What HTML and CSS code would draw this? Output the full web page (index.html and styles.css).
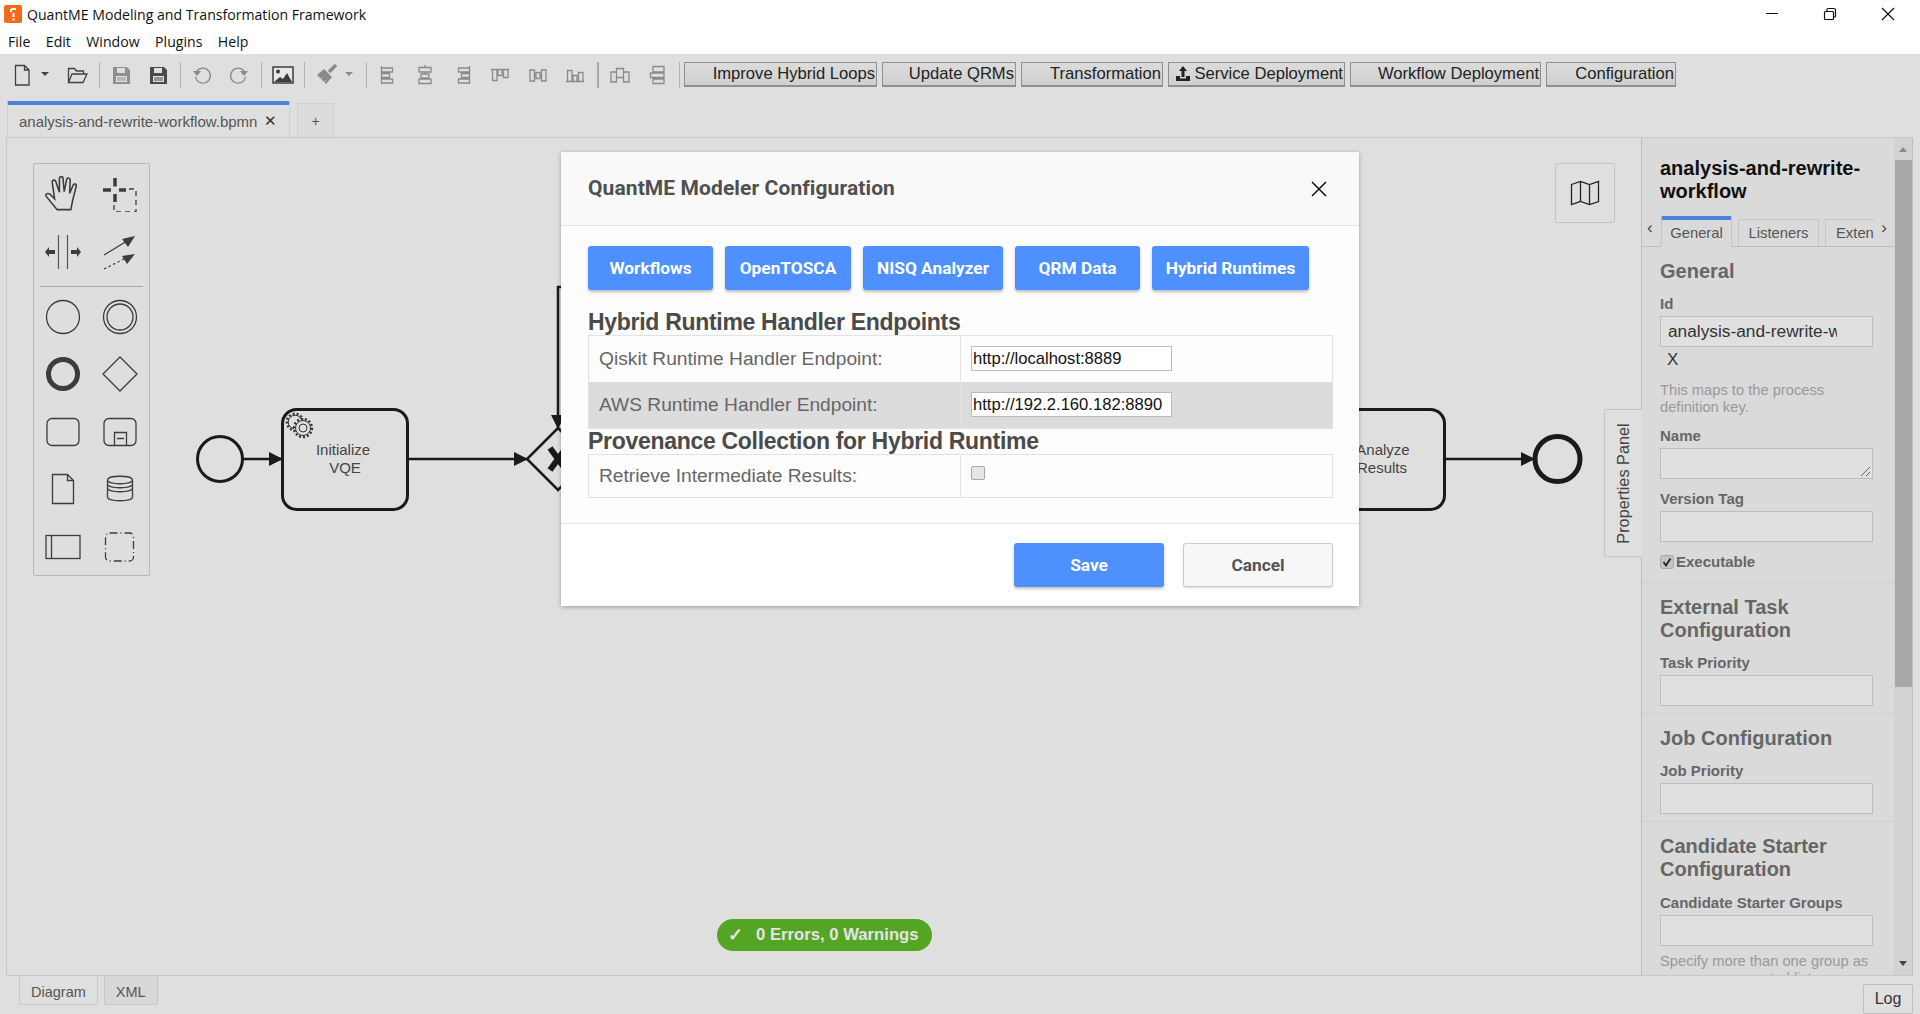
FILE: index.html
```html
<!DOCTYPE html>
<html lang="en">
<head>
    <meta charset="UTF-8">
    <title>QuantME Modeling and Transformation Framework</title>
    <link rel="stylesheet" href="styles.css">
</head>
<body>
    <div class="titlebar">
        <svg class="app-icon" width="18" height="20" viewBox="0 0 18 20">
            <rect x="0" y="1" width="18" height="18" rx="2" fill="#f26a1b"/>
            <path d="M7 5h5M7 5v3M9.500 9v4" stroke="#fff" stroke-width="2" fill="none"/>
            <rect x="8.500" y="14.500" width="2" height="2" fill="#fff"/>
        </svg>
        <span class="app-title">QuantME Modeling and Transformation Framework</span>
        <div class="window-controls">
            <svg width="46" height="28" viewBox="0 0 46 28"><path d="M17 13.500h12" stroke="#111" fill="none"/></svg>
            <svg width="46" height="28" viewBox="0 0 46 28"><path d="M18.500 11.500h7a1 1 0 0 1 1 1v6a1 1 0 0 1-1 1h-7a1 1 0 0 1-1-1v-6a1 1 0 0 1 1-1zM20 11V9.500a1 1 0 0 1 1-1h6a1.500 1.500 0 0 1 1.500 1.500v6a1 1 0 0 1-1 1H27" stroke="#111" stroke-width="1.200" fill="none"/></svg>
            <svg width="46" height="28" viewBox="0 0 46 28"><path d="M17 8l12 12M29 8L17 20" stroke="#111" stroke-width="1.200" fill="none"/></svg>
        </div>
    </div>
    <div class="menubar">
        <span>File</span>
        <span>Edit</span>
        <span>Window</span>
        <span>Plugins</span>
        <span>Help</span>
    </div>

    <div class="app">
        <div class="toolbar">
            <span class="tool"><svg width="24" height="24" viewBox="0 0 24 24"><path d="M5.500 2.500h9l4.500 4.500v15h-13.500zM14.500 2.500v4.500h4.500" class="ln"/></svg></span>
            <span class="caret-box"><i class="caret"></i></span>
            <span class="tool"><svg width="24" height="24" viewBox="0 0 24 24"><path d="M3.500 19.500v-14h6l2 2.500h7v3M3.500 19.500l3.500-8.500h15l-4 8.500z" class="ln"/></svg></span>
            <span class="sep"></span>
            <span class="tool"><svg width="24" height="24" viewBox="0 0 24 24"><path d="M4 4h14l3 3v14H4z" fill="#8f8f8f"/><rect x="8" y="5" width="8" height="5" fill="#dfdfdf"/><rect x="7" y="13" width="11" height="6" fill="#dfdfdf"/><path d="M8 15h9M8 17h9" stroke="#8f8f8f"/></svg></span>
            <span class="tool"><svg width="24" height="24" viewBox="0 0 24 24"><path d="M4 4h14l3 3v14H4z" fill="#4a4a4a"/><rect x="8" y="5" width="8" height="5" fill="#dfdfdf"/><rect x="7" y="13" width="11" height="6" fill="#dfdfdf"/><path d="M8 15h9M8 17h9" stroke="#4a4a4a"/></svg></span>
            <span class="sep"></span>
            <span class="tool"><svg width="24" height="24" viewBox="0 0 24 24"><path d="M7 8a7.500 7.500 0 1 1-1.500 6" class="ln ln-dim" stroke-width="2"/><path d="M3 8l8 0-4 5z" fill="#8a8a8a"/></svg></span>
            <span class="tool"><svg width="24" height="24" viewBox="0 0 24 24"><path d="M17 8a7.500 7.500 0 1 0 1.500 6" class="ln ln-dim" stroke-width="2"/><path d="M21 8l-8 0 4 5z" fill="#8a8a8a"/></svg></span>
            <span class="sep"></span>
            <span class="tool"><svg width="24" height="24" viewBox="0 0 24 24"><rect x="2" y="4" width="20" height="16" fill="#e8e8e8" stroke="#3c3c3c" stroke-width="1.500"/><circle cx="7" cy="8.500" r="2" fill="#3c3c3c"/><path d="M3 19l6-5 3 2 4-6 5 9z" fill="#3c3c3c"/></svg></span>
            <span class="sep"></span>
            <span class="tool"><svg width="24" height="24" viewBox="0 0 24 24"><path d="M15 9l7-7" stroke="#8a8a8a" stroke-width="3.500" fill="none"/><path d="M10 6l8 8-6 7-9-9z" fill="#8a8a8a"/><path d="M6 16.500l2-2M9.500 19.500l2-2" stroke="#dfdfdf" fill="none"/></svg></span>
            <span class="caret-box"><i class="caret caret-dim"></i></span>
            <span class="sep"></span>
            <span class="tool"><svg width="24" height="24" viewBox="0 0 24 24"><path d="M5.500 3v18M5.500 5h11v4h-11M5.500 10.500h8v4h-8M5.500 16h11v4h-11" class="ln ln-dim"/></svg></span>
            <span class="tool"><svg width="24" height="24" viewBox="0 0 24 24"><path d="M12 2v2M12 9v2M12 14.500v2M6 4.500h12v4.500H6zM8 11h8v4H8zM6 16h12v4.500H6z" class="ln ln-dim"/></svg></span>
            <span class="tool"><svg width="24" height="24" viewBox="0 0 24 24"><path d="M18.500 3v18M18.500 5h-11v4h11M18.500 10.500h-8v4h8M18.500 16h-11v4h11" class="ln ln-dim"/></svg></span>
            <span class="tool"><svg width="24" height="24" viewBox="0 0 24 24"><path d="M3 6.500h18M4.500 6.500h4.500v11H4.500zM10 6.500h4v6h-4zM15.500 6.500H20v8h-4.500z" class="ln ln-dim"/></svg></span>
            <span class="tool"><svg width="24" height="24" viewBox="0 0 24 24"><path d="M4 7h4.500v11H4zM10 9.500h4v6h-4zM15.500 7H20v11h-4.500zM8.500 12.500H10M14 12.500h1.500" class="ln ln-dim"/></svg></span>
            <span class="tool"><svg width="24" height="24" viewBox="0 0 24 24"><path d="M3 18.500h18M4.500 7.500h4.500v11H4.500zM10 12.500h4v6h-4zM15.500 9.500H20v9h-4.500z" class="ln ln-dim"/></svg></span>
            <span class="sep sep-wide"></span>
            <span class="tool"><svg width="24" height="24" viewBox="0 0 24 24"><path d="M3 9h5.500v10H3zM8.500 5.500h7v9h-7zM15.500 9H21v10h-5.500z" class="ln ln-dim"/></svg></span>
            <span class="tool"><svg width="24" height="24" viewBox="0 0 24 24"><path d="M8 3.500h11V9H8zM5.500 10h13.500v4.500H5.500zM8 16h11v4.500H8z" class="ln ln-dim"/></svg></span>
            <span class="sep"></span>
            <button class="tb-btn tb-w1">Improve Hybrid Loops</button>
            <button class="tb-btn tb-w2">Update QRMs</button>
            <button class="tb-btn tb-w3">Transformation</button>
            <button class="tb-btn tb-w4">
                <svg class="upload" width="16" height="18" viewBox="0 0 16 18"><path d="M8 1l4 5H9.500v6h-3V6H4z" fill="#222"/><path d="M1 11h4v2.500h6V11h4v5H1z" fill="#222"/></svg>
                Service Deployment
            </button>
            <button class="tb-btn tb-w5">Workflow Deployment</button>
            <button class="tb-btn tb-w6">Configuration</button>
        </div>

        <div class="tabbar">
            <div class="tab tab-active">analysis-and-rewrite-workflow.bpmn<span class="tab-close">&#10005;</span></div>
            <div class="tab tab-add">+</div>
        </div>

        <div class="main">
            <div class="canvas">
                <svg class="diagram" width="1640" height="480" viewBox="0 0 1640 480">
                    <defs>
                        <marker id="arrow" markerWidth="14" markerHeight="14" refX="13" refY="7" orient="auto" markerUnits="userSpaceOnUse">
                            <path d="M0 0L14 7L0 14z" fill="#1a1a1a"/>
                        </marker>
                    </defs>
                    <g fill="none" stroke="#1a1a1a">
                        <circle cx="220" cy="322" r="22.500" stroke-width="3"/>
                        <rect x="282.500" y="272.500" width="125" height="100" rx="14" stroke-width="3"/>
                        <path d="M243 322H282" stroke-width="2.500" marker-end="url(#arrow)"/>
                        <path d="M408 322H527" stroke-width="2.500" marker-end="url(#arrow)"/>
                        <path d="M562 150H558V291" stroke-width="2.500" marker-end="url(#arrow)"/>
                        <path d="M558 291L589 322L558 353L527 322z" stroke-width="2.500"/>
                        <path d="M550 311L566 333M566 311L550 333" stroke-width="6"/>
                        <rect x="1330.500" y="272.500" width="114" height="100" rx="14" stroke-width="3"/>
                        <path d="M1445 322H1534" stroke-width="2.500" marker-end="url(#arrow)"/>
                        <circle cx="1557.500" cy="322" r="22.500" stroke-width="5"/>
                    </g>
                    <g transform="translate(285 275)" fill="none" stroke="#333">
                        <circle cx="10" cy="10" r="8.200" stroke-dasharray="2 2" stroke-width="2.400"/>
                        <circle cx="10" cy="10" r="6.800"/>
                        <circle cx="18" cy="16" r="9" fill="#dfdfdf" stroke-dasharray="2 2" stroke-width="2.400"/>
                        <circle cx="18" cy="16" r="7.500" fill="#dfdfdf"/>
                        <circle cx="18" cy="16" r="4"/>
                    </g>
                    <text class="shape-label" x="343" y="318" text-anchor="middle">Initialize</text>
                    <text class="shape-label" x="345" y="336" text-anchor="middle">VQE</text>
                    <text class="shape-label" x="1383" y="318" text-anchor="middle">Analyze</text>
                    <text class="shape-label" x="1382" y="336" text-anchor="middle">Results</text>
                </svg>

                <div class="palette">
                    <div class="palette-grid">
                        <svg width="36" height="36" viewBox="2 2 30 30"><path d="M12 30l-9-11c-1-2 1-3 3-2l4 4L8 7c0-2 2.500-2 3-.5l3 9L14 4c0-2 3-2 3 0l1 11 2-10c.5-2 3-1.500 3 .5l-.5 11 3-7c1-1.500 3-1 2.500 1l-3 12-1.500 7.500z" class="ln-thin"/></svg>
                        <svg width="36" height="36" viewBox="0 0 36 36"><path d="M13 2v8.500M13 18v8M1 14h8M17 14h7" stroke="#3c3c3c" stroke-width="3.500" fill="none"/><path d="M27 13h7v23H12v-7" stroke="#3c3c3c" stroke-width="1.300" stroke-dasharray="5 4" fill="none"/></svg>
                        <svg width="36" height="36" viewBox="0 0 36 36"><path d="M13.500 1v34M22.500 1v34" stroke="#555" fill="none" stroke-width="1.200"/><path d="M0 18l4-5v3h6v4H4v3zM36 18l-4-5v3h-6v4h6v3z" fill="#3c3c3c"/></svg>
                        <svg width="36" height="36" viewBox="0 0 36 36"><path d="M2 21l23-14" stroke="#3c3c3c" stroke-width="1.200"/><path d="M33 2l-13 3 6 8z" fill="#3c3c3c"/><path d="M2 35l22-11" stroke="#3c3c3c" stroke-dasharray="2.500 2.500" stroke-width="1.200"/><path d="M33 20l-13 2 5 8z" fill="#3c3c3c"/></svg>
                    </div>
                    <hr class="palette-sep">
                    <div class="palette-grid">
                        <svg width="36" height="36" viewBox="0 0 36 36"><circle cx="18" cy="18" r="16.500" class="ln-thin"/></svg>
                        <svg width="36" height="36" viewBox="0 0 36 36"><circle cx="18" cy="18" r="16.500" class="ln-thin"/><circle cx="18" cy="18" r="13" class="ln-thin"/></svg>
                        <svg width="36" height="36" viewBox="0 0 36 36"><circle cx="18" cy="18" r="14.500" fill="none" stroke="#3c3c3c" stroke-width="5"/></svg>
                        <svg width="36" height="36" viewBox="0 0 36 36"><path d="M18 1l17 17-17 17L1 18z" class="ln-thin"/></svg>
                        <svg width="36" height="36" viewBox="0 0 36 36"><rect x="2" y="4.500" width="32" height="27" rx="5" class="ln-thin"/></svg>
                        <svg width="36" height="36" viewBox="0 0 36 36"><rect x="2" y="4.500" width="32" height="27" rx="5" class="ln-thin"/><path d="M12.500 31V18.500h12V31M15 24.500h7" class="ln-thin"/></svg>
                        <svg width="36" height="36" viewBox="0 0 36 36"><path d="M7.500 3.500h15l6 6v23h-21zM22.500 3.500v6h6" class="ln-thin"/></svg>
                        <svg width="36" height="36" viewBox="0 0 36 36"><path d="M5.500 9c0-5 25-5 25 0v17c0 5-25 5-25 0zM5.500 9c0 5 25 5 25 0M5.500 13c0 5 25 5 25 0M5.500 17c0 5 25 5 25 0" class="ln-thin"/></svg>
                        <svg width="36" height="36" viewBox="0 0 36 36"><rect x="1" y="6.500" width="34" height="23" class="ln-thin"/><path d="M6.500 6.500v23" class="ln-thin"/></svg>
                        <svg width="36" height="36" viewBox="0 0 36 36"><rect x="3.500" y="4" width="28" height="28" rx="4" stroke-dasharray="8 3 1 3" class="ln-thin"/></svg>
                    </div>
                </div>

                <div class="minimap-toggle">
                    <svg width="30" height="26" viewBox="0 0 30 26"><path d="M1.500 4.500l9-3 9 3 9-3v20l-9 3-9-3-9 3zM10.500 1.500v20M19.500 4.500v20" fill="none" stroke="#222" stroke-width="1.300"/></svg>
                </div>

                <div class="status-pill"><span class="status-check">&#10003;</span>0 Errors, 0 Warnings</div>

                <div class="panel-toggle"><span>Properties Panel</span></div>
            </div>

            <div class="props">
                <div class="props-body">
                    <div class="props-title">analysis-and-rewrite-workflow</div>
                    <div class="props-tabs">
                        <span class="chev chev-l">&#8249;</span>
                        <span class="ptab ptab-active">General</span>
                        <span class="ptab ptab-listeners">Listeners</span>
                        <span class="ptab ptab-ext">Exten</span>
                        <span class="chev chev-r">&#8250;</span>
                    </div>
                    <div class="group">
                        <h3>General</h3>
                        <label>Id</label>
                        <input class="field field-id" type="text" value="analysis-and-rewrite-workflow">
                        <div class="clear-x">X</div>
                        <p class="hint">This maps to the process definition key.</p>
                        <label>Name</label>
                        <div class="field field-name">
                            <svg class="resize" width="11" height="11" viewBox="0 0 11 11"><path d="M1 10L10 1M6 10l4-4" stroke="#666" fill="none"/></svg>
                        </div>
                        <label>Version Tag</label>
                        <div class="field field-gap"></div>
                        <div class="check-row">
                            <svg width="14" height="14" viewBox="0 0 14 14"><rect x=".5" y=".5" width="13" height="13" rx="2" fill="#c4c4c4" stroke="#aaa"/><path d="M3.500 7l2.500 3.500 4.500-7" fill="none" stroke="#222" stroke-width="1.800"/></svg>
                            <span>Executable</span>
                        </div>
                    </div>
                    <div class="group">
                        <h3>External Task Configuration</h3>
                        <label>Task Priority</label>
                        <div class="field"></div>
                    </div>
                    <div class="group">
                        <h3>Job Configuration</h3>
                        <label>Job Priority</label>
                        <div class="field"></div>
                    </div>
                    <div class="group">
                        <h3 class="h3-wide">Candidate Starter Configuration</h3>
                        <label>Candidate Starter Groups</label>
                        <div class="field"></div>
                        <p class="hint hint-last">Specify more than one group as a comma separated list.</p>
                    </div>
                </div>
                <div class="scrollbar">
                    <i class="sb-up"></i>
                    <div class="sb-thumb"></div>
                    <i class="sb-down"></i>
                </div>
            </div>
        </div>

        <div class="bottombar">
            <div class="btab btab-active">Diagram</div>
            <div class="btab">XML</div>
            <div class="log-btn">Log</div>
        </div>
    </div>

    <div class="modal">
        <div class="modal-header">
            <h2>QuantME Modeler Configuration</h2>
            <svg width="18" height="18" viewBox="0 0 18 18"><path d="M2 2l14 14M16 2L2 16" stroke="#111" stroke-width="1.500" fill="none"/></svg>
        </div>
        <div class="modal-body">
            <div class="modal-tabs">
                <button class="primary mt-w1">Workflows</button>
                <button class="primary mt-w2">OpenTOSCA</button>
                <button class="primary mt-w3">NISQ Analyzer</button>
                <button class="primary mt-w4">QRM Data</button>
                <button class="primary mt-w5">Hybrid Runtimes</button>
            </div>
            <h3 class="cfg-title">Hybrid Runtime Handler Endpoints</h3>
            <table class="cfg-table">
                <tr>
                    <td class="cfg-label">Qiskit Runtime Handler Endpoint:</td>
                    <td><input class="cfg-input" type="text" value="http://localhost:8889"></td>
                </tr>
                <tr class="cfg-alt">
                    <td class="cfg-label">AWS Runtime Handler Endpoint:</td>
                    <td><input class="cfg-input" type="text" value="http://192.2.160.182:8890"></td>
                </tr>
            </table>
            <h3 class="cfg-title cfg-title-2">Provenance Collection for Hybrid Runtime</h3>
            <table class="cfg-table">
                <tr class="cfg-check-row">
                    <td class="cfg-label">Retrieve Intermediate Results:</td>
                    <td><input class="cfg-check" type="checkbox"></td>
                </tr>
            </table>
        </div>
        <div class="modal-footer">
            <button class="primary save-btn">Save</button>
            <button class="cancel-btn">Cancel</button>
        </div>
    </div>
</body>
</html>
```
FILE: styles.css
```css
* {
    box-sizing: border-box;
}

html, body {
    height: 100%;
}

body {
    margin: 0;
    height: 1014px;
    overflow: hidden;
    display: flex;
    flex-direction: column;
    background: #dfdfdf;
    font-family: "Liberation Sans", Arial, sans-serif;
    color: #444;
}

.titlebar {
    height: 28px;
    flex: none;
    display: flex;
    align-items: center;
    padding-left: 4px;
    background: #fff;
}

.app-icon {
    margin-right: 5px;
    margin-top: -1px;
}

.app-title {
    font-family: "Open Sans", sans-serif;
    font-size: 14.100px;
    color: #111;
}

.window-controls {
    margin-left: auto;
    margin-right: 9px;
    display: flex;
    gap: 12px;
}

.menubar {
    height: 26px;
    flex: none;
    display: flex;
    align-items: center;
    padding-left: 8px;
    gap: 15.500px;
    background: #fff;
    font-family: "Open Sans", sans-serif;
    font-size: 14.100px;
    color: #111;
}

.app {
    flex: 1;
    display: flex;
    flex-direction: column;
    min-height: 0;
}

.toolbar {
    height: 46px;
    flex: none;
    display: flex;
    align-items: flex-start;
    padding: 8px 0 0 3px;
}

.tool {
    width: 37.500px;
    height: 26px;
    flex: none;
    display: flex;
    align-items: center;
    justify-content: center;
}

.ln {
    fill: none;
    stroke: #3f3f3f;
    stroke-width: 1.300;
}

.ln-dim {
    stroke: #8a8a8a;
}

.ln-thin {
    fill: none;
    stroke: #3c3c3c;
    stroke-width: 1.300;
}

.caret-box {
    width: 18px;
    height: 26px;
    flex: none;
    display: flex;
    align-items: center;
}

.caret {
    width: 0;
    height: 0;
    border-left: 4px solid transparent;
    border-right: 4px solid transparent;
    border-top: 4px solid #444;
    margin-top: -2px;
}

.caret-dim {
    border-top-color: #8a8a8a;
}

.sep {
    width: 1px;
    height: 26px;
    flex: none;
    margin: 0 2.500px;
    background: #b4b4b4;
}

.sep-wide {
    width: 2px;
    background: #a8a8a8;
}

.tb-btn {
    height: 25px;
    flex: none;
    margin-left: 5px;
    padding: 0 1px 0 0;
    display: flex;
    align-items: center;
    justify-content: flex-end;
    gap: 4px;
    background: linear-gradient(#dcdcdc, #cfcfcf);
    border: 1px solid #8f8f8f;
    border-bottom-width: 2px;
    font-family: "Liberation Sans", sans-serif;
    font-size: 16.600px;
    color: #222;
}

.tb-w1 { width: 193px; margin-left: 2px; }
.tb-w2 { width: 134px; }
.tb-w3 { width: 142px; }
.tb-w4 { width: 177px; }
.tb-w5 { width: 191px; }
.tb-w6 { width: 130px; }

.upload {
    margin-right: 0;
}

.tabbar {
    height: 37px;
    flex: none;
    display: flex;
    align-items: flex-end;
    padding-left: 7px;
    gap: 7px;
}

.tab {
    height: 36px;
    display: flex;
    align-items: center;
    border: 1px solid #cfcfcf;
    border-bottom: none;
    font-size: 15px;
    color: #555;
}

.tab-active {
    width: 283px;
    padding-left: 11px;
    border-top: 4px solid #4d82d8;
    border-radius: 2px 2px 0 0;
}

.tab-close {
    margin-left: 7px;
    font-size: 15px;
    color: #333;
}

.tab-add {
    width: 37px;
    height: 34px;
    justify-content: center;
    font-size: 14px;
    background: #dcdcdc;
}

.main {
    flex: 1;
    display: flex;
    min-height: 0;
    margin: 0 7px 0 6px;
    border: 1px solid #c8c8c8;
    border-right: none;
}

.canvas {
    position: relative;
    flex: 1;
    min-width: 0;
}

.diagram {
    position: absolute;
    left: -7px;
    top: -1px;
}

.shape-label {
    font-family: "Liberation Sans", sans-serif;
    font-size: 15px;
    fill: #444;
}

.palette {
    position: absolute;
    left: 26px;
    top: 25px;
    width: 117px;
    height: 413px;
    padding: 12px 12px 0;
    background: #dedede;
    border: 1px solid #b8b8b8;
    border-radius: 2px;
}

.palette-grid {
    display: grid;
    grid-template-columns: 36px 36px;
    column-gap: 21px;
    row-gap: 21.500px;
    justify-content: center;
}

.palette-sep {
    width: 103px;
    height: 1px;
    margin: 16px 0 12px -6px;
    border: none;
    background: #a8a8a8;
}

.minimap-toggle {
    position: absolute;
    right: 26px;
    top: 25px;
    width: 60px;
    height: 60px;
    display: flex;
    align-items: center;
    justify-content: center;
    border: 1px solid #c4c4c4;
    border-radius: 2px;
}

.status-pill {
    position: absolute;
    left: 710px;
    top: 781px;
    width: 215px;
    height: 32px;
    display: flex;
    align-items: center;
    padding-left: 11px;
    background: #54a524;
    border-radius: 16px;
    font-size: 16.700px;
    font-weight: bold;
    color: #e4e4e4;
}

.status-check {
    width: 28px;
    font-size: 18px;
}

.panel-toggle {
    position: absolute;
    right: -1px;
    top: 271px;
    width: 38px;
    height: 148px;
    display: flex;
    align-items: center;
    justify-content: center;
    background: #dfdfdf;
    border: 1px solid #c4c4c4;
    border-right: none;
    border-radius: 2px 0 0 2px;
    z-index: 1;
}

.panel-toggle span {
    transform: rotate(-90deg);
    white-space: nowrap;
    font-size: 16.300px;
    color: #444;
}

.props {
    width: 272px;
    flex: none;
    display: flex;
    background: #dadada;
    border-left: 1px solid #bdbdbd;
    border-right: 1px solid #bdbdbd;
    overflow: hidden;
}

.props-body {
    flex: 1;
    min-width: 0;
    height: 900px;
}

.props-title {
    padding: 19px 19px 0 18px;
    font-size: 20px;
    line-height: 23px;
    font-weight: bold;
    color: #111;
}

.props-tabs {
    position: relative;
    height: 32px;
    margin-top: 12px;
    padding-left: 19px;
    display: flex;
    align-items: flex-end;
    gap: 6px;
    border-bottom: 1px solid #bdbdbd;
    font-size: 14.800px;
}

.ptab {
    height: 28px;
    margin-bottom: -1px;
    display: flex;
    align-items: center;
    justify-content: center;
    border: 1px solid #c4c4c4;
    border-bottom: 1px solid #bdbdbd;
    border-radius: 2px 2px 0 0;
    color: #555;
}

.ptab-active {
    width: 71px;
    height: 31px;
    border-top: 4px solid #4d82d8;
    border-bottom-color: #dadada;
}

.ptab-listeners {
    width: 81px;
}

.ptab-ext {
    width: 49px;
    justify-content: flex-start;
    padding-left: 10px;
    border-right: none;
    overflow: hidden;
}

.chev {
    position: absolute;
    top: 3px;
    font-size: 17px;
    color: #444;
}

.chev-l {
    left: 5px;
}

.chev-r {
    right: 7px;
}

.group {
    padding: 11px 21px 0 18px;
    border-bottom: 1px solid #d0d0d0;
}

.group h3 {
    margin: 0 0 13px;
    padding-top: 2px;
    font-size: 20px;
    line-height: 23px;
    color: #666;
}

.group .h3-wide {
    margin-bottom: 14px;
}

.group label {
    display: block;
    margin-bottom: 4px;
    font-size: 15px;
    line-height: 16px;
    font-weight: bold;
    color: #666;
}

.field {
    position: relative;
    display: block;
    width: 100%;
    height: 31px;
    margin-bottom: 7px;
    background: #e0e0e0;
    border: 1px solid #bdbdbd;
}

.field-name {
    margin-bottom: 12px;
}

.field-gap {
    margin-bottom: 11px;
}

.field-id {
    margin-bottom: 0;
    padding: 0 35px 0 7px;
    font-family: "Liberation Sans", sans-serif;
    font-size: 17.300px;
    color: #333;
}

.clear-x {
    margin: 3px 0 0 7px;
    font-size: 17px;
    line-height: 20px;
    color: #333;
}

.resize {
    position: absolute;
    right: 1px;
    bottom: 1px;
}

.hint {
    margin: 12px 0 12px;
    font-size: 14.700px;
    line-height: 17px;
    color: #999;
}

.hint-last {
    margin-top: 7px;
}

.check-row {
    display: flex;
    align-items: center;
    gap: 2px;
    margin-top: 1px;
    padding-bottom: 12px;
    font-size: 15px;
    font-weight: bold;
    color: #666;
}

.scrollbar {
    position: relative;
    width: 18px;
    flex: none;
    background: #d2d2d2;
}

.sb-thumb {
    position: absolute;
    left: 1px;
    right: 0;
    top: 22px;
    height: 527px;
    background: #a8a8a8;
}

.sb-up, .sb-down {
    position: absolute;
    left: 5px;
    width: 0;
    height: 0;
    border-left: 4px solid transparent;
    border-right: 4px solid transparent;
}

.sb-up {
    top: 9px;
    border-bottom: 5px solid #888;
}

.sb-down {
    bottom: 9px;
    border-top: 5px solid #444;
}

.bottombar {
    height: 38px;
    flex: none;
    display: flex;
    align-items: flex-start;
    padding: 0 7px 0 19px;
    gap: 6px;
}

.btab {
    height: 29px;
    padding: 3px 11px 0;
    display: flex;
    align-items: center;
    background: #d8d8d8;
    border: 1px solid #c8c8c8;
    border-top: none;
    border-radius: 0 0 2px 2px;
    font-size: 14.500px;
    color: #555;
}

.btab-active {
    background: #dfdfdf;
}

.log-btn {
    margin-left: auto;
    margin-top: 8px;
    width: 50px;
    height: 30px;
    display: flex;
    align-items: center;
    justify-content: center;
    border: 1px solid #bdbdbd;
    border-radius: 2px;
    font-size: 16px;
    color: #333;
}

.modal {
    position: absolute;
    left: 561px;
    top: 152px;
    width: 798px;
    height: 454px;
    display: flex;
    flex-direction: column;
    background: #fff;
    border-radius: 2px;
    box-shadow: 0 1px 4px rgba(0, 0, 0, 0.3);
}

.modal-header {
    height: 74px;
    flex: none;
    display: flex;
    align-items: center;
    justify-content: space-between;
    padding: 0 31px 0 27px;
    background: #f9f9f9;
    border-bottom: 1px solid #e2e2e2;
}

.modal-header h2 {
    margin: -2px 0 0;
    font-family: Roboto, sans-serif;
    font-size: 21px;
    font-weight: 700;
    letter-spacing: 0.100px;
    color: #505050;
}

.modal-body {
    flex: 1;
    padding: 20px 26px 0 27px;
    background: #fdfdfd;
}

.modal-tabs {
    display: flex;
    gap: 12px;
    margin-bottom: 19px;
}

.primary {
    height: 44px;
    padding: 0;
    background: #4d90fe;
    border: none;
    border-radius: 3px;
    box-shadow: 0 2px 3px rgba(0, 0, 0, 0.25);
    font-family: Roboto, sans-serif;
    font-size: 17.300px;
    font-weight: 700;
    color: #fff;
}

.mt-w1 { width: 125px; }
.mt-w2 { width: 126px; }
.mt-w3 { width: 140px; }
.mt-w4 { width: 125px; }
.mt-w5 { width: 157px; }

.cfg-title {
    margin: 0;
    font-size: 23px;
    line-height: 26px;
    font-weight: bold;
    letter-spacing: -0.300px;
    color: #4a4a4a;
}

.cfg-title-2 {
    margin-top: -1px;
}

.cfg-table {
    width: 745px;
    table-layout: fixed;
    border-collapse: collapse;
    border: 1px solid #e2e2e2;
}

.cfg-table td {
    height: 46px;
    padding: 0 10px;
    border-right: 1px solid #e2e2e2;
}

.cfg-label {
    width: 372px;
    font-size: 19.200px;
    color: #666;
}

.cfg-alt {
    background: #dcdcdc;
}

.cfg-alt td {
    height: 47px;
}

.cfg-check-row td {
    height: 43px;
}

.cfg-input {
    display: block;
    width: 201px;
    height: 25px;
    padding: 0 1px;
    background: #fff;
    border: 1px solid #bbb;
    font-family: "Liberation Sans", sans-serif;
    font-size: 16.600px;
    color: #111;
}

.cfg-check {
    display: block;
    width: 14px;
    height: 14px;
    margin: -6px 0 0 0;
    appearance: none;
    background: #e6e6e6;
    border: 1px solid #a8a8a8;
    border-radius: 2px;
}

.modal-footer {
    height: 83px;
    flex: none;
    display: flex;
    justify-content: flex-end;
    gap: 19px;
    padding: 19px 26px 0 0;
    background: #fff;
    border-top: 1px solid #e2e2e2;
}

.save-btn {
    width: 150px;
}

.cancel-btn {
    width: 150px;
    height: 44px;
    background: #f7f7f7;
    border: 1px solid #ccc;
    border-radius: 3px;
    box-shadow: 0 1px 2px rgba(0, 0, 0, 0.15);
    font-family: Roboto, sans-serif;
    font-size: 17.300px;
    font-weight: 700;
    color: #555;
}
```
